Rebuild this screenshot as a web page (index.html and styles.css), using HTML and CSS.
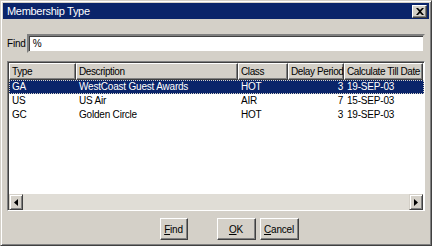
FILE: index.html
```html
<!DOCTYPE html>
<html lang="en">
  <head>
    <title>Membership Type</title>
    <link rel="stylesheet" href="styles.css">
  </head>
  <body>
    <div class="window">
      <div class="titlebar">
        <span class="title">Membership Type</span>
        <span class="close">
          <svg width="8" height="7" viewBox="0 0 8 7"><path d="M0 0h2l2 2 2-2h2L5 3.5 8 7H6L4 5 2 7H0l3-3.5z" fill="#000"/></svg>
        </span>
      </div>

      <div class="findrow">
        <label>Find</label>
        <div class="input">%</div>
      </div>

      <div class="grid">
        <div class="row head">
          <div class="c type">Type</div>
          <div class="c desc">Description</div>
          <div class="c cls">Class</div>
          <div class="c delay">Delay Period</div>
          <div class="c till">Calculate Till Date</div>
        </div>
        <div class="row sel">
          <div class="c type">GA</div>
          <div class="c desc">WestCoast Guest Awards</div>
          <div class="c cls">HOT</div>
          <div class="c delay num">3</div>
          <div class="c till">19-SEP-03</div>
        </div>
        <div class="row">
          <div class="c type">US</div>
          <div class="c desc">US Air</div>
          <div class="c cls">AIR</div>
          <div class="c delay num">7</div>
          <div class="c till">15-SEP-03</div>
        </div>
        <div class="row">
          <div class="c type">GC</div>
          <div class="c desc">Golden Circle</div>
          <div class="c cls">HOT</div>
          <div class="c delay num">3</div>
          <div class="c till">19-SEP-03</div>
        </div>
        <div class="spacer"></div>
        <div class="hscroll">
          <div class="arrow"><svg width="4" height="7" viewBox="0 0 4 7"><path d="M4 0v7L0 3.5z" fill="#000"/></svg></div>
          <div class="track"></div>
          <div class="arrow"><svg width="4" height="7" viewBox="0 0 4 7"><path d="M0 0v7l4-3.5z" fill="#000"/></svg></div>
        </div>
      </div>

      <div class="buttons">
        <button class="btn find"><u>F</u>ind</button>
        <button class="btn ok"><u>O</u>K</button>
        <button class="btn"><u>C</u>ancel</button>
      </div>
    </div>
  </body>
</html>
```

FILE: styles.css
```css
html, body {
  margin: 0;
  padding: 0;
  background: #d4d0c8;
}

body {
  font-family: "Liberation Sans", Arial, sans-serif;
  font-size: 10px;
  letter-spacing: -0.2px;
  font-variant-ligatures: none;
  color: #000;
}

.window {
  width: 432px;
  height: 246px;
  box-sizing: border-box;
  border: 1px solid;
  border-color: #d4d0c8 #404040 #404040 #d4d0c8;
  box-shadow: inset 1px 1px 0 #fff, inset -1px -1px 0 #808080;
  padding: 2px;
  display: flex;
  flex-direction: column;
}

.titlebar {
  height: 16px;
  background: #0a246a;
  color: #fff;
  display: flex;
  align-items: center;
  justify-content: space-between;
  padding: 0 2px 0 4px;
}

.title {
  font-size: 11px;
  letter-spacing: -0.3px;
}

.close {
  width: 15px;
  height: 13px;
  box-sizing: border-box;
  background: #d4d0c8;
  border: 1px solid;
  border-color: #fff #404040 #404040 #fff;
  box-shadow: inset -1px -1px 0 #808080;
  display: flex;
  align-items: center;
  justify-content: center;
}

.findrow {
  display: flex;
  align-items: center;
  margin: 15px 4px 0 4px;
  height: 19px;
}

.findrow label {
  margin-right: 1px;
}

.input {
  flex: 1;
  height: 19px;
  box-sizing: border-box;
  background: #fff;
  border: 2px solid;
  border-color: #808080 #d4d0c8 #d4d0c8 #808080;
  box-shadow: inset 1px 1px 0 #404040;
  padding: 2px 4px;
}

.grid {
  margin: 8px 4px 0 4px;
  height: 150px;
  box-sizing: border-box;
  background: #fff;
  border: 1px solid;
  border-color: #808080 #fff #fff #808080;
  box-shadow: inset 1px 1px 0 #404040;
  padding: 1px 0 0 1px;
  display: flex;
  flex-direction: column;
}

.row {
  display: flex;
  height: 14px;
  line-height: 14px;
}

.row.head {
  height: 17px;
  line-height: 15px;
}

.head .c {
  background: #d4d0c8;
  border: 1px solid;
  border-color: #fff #404040 #404040 #fff;
  box-shadow: inset -1px -1px 0 #808080;
  padding: 0 1px 0 2px;
  letter-spacing: -0.4px;
}

.c {
  box-sizing: border-box;
  padding: 0 3px;
  white-space: nowrap;
  overflow: hidden;
}

.type { width: 67px; }
.desc { width: 162px; }
.cls { width: 50px; }
.delay { width: 56px; }
.till { width: 79px; }

.num {
  text-align: right;
  padding-right: 1px;
}

.row.sel {
  background: #0a246a;
  color: #fff;
  outline: 1px dotted #d4d0c8;
  outline-offset: -1px;
}

.spacer {
  flex: 1;
}

.hscroll {
  display: flex;
  height: 16px;
  margin-right: 1px;
}

.arrow {
  width: 14px;
  height: 16px;
  box-sizing: border-box;
  background: #d4d0c8;
  border: 1px solid;
  border-color: #d4d0c8 #404040 #404040 #d4d0c8;
  box-shadow: inset 1px 1px 0 #fff, inset -1px -1px 0 #808080;
  display: flex;
  align-items: center;
  justify-content: center;
}

.track {
  flex: 1;
  background: #e0ddd6;
}

.buttons {
  display: flex;
  justify-content: center;
  margin-top: 7px;
  padding-left: 30px;
}

.btn {
  font-family: "Liberation Sans", Arial, sans-serif;
  font-size: 10px;
  letter-spacing: -0.2px;
  height: 22px;
  width: 39px;
  background: #d4d0c8;
  border: 1px solid;
  border-color: #fff #404040 #404040 #fff;
  box-shadow: inset -1px -1px 0 #808080;
  padding: 0;
  margin-right: 4px;
  color: #000;
}

.btn.find {
  width: 28px;
  margin-right: 29px;
}
```
